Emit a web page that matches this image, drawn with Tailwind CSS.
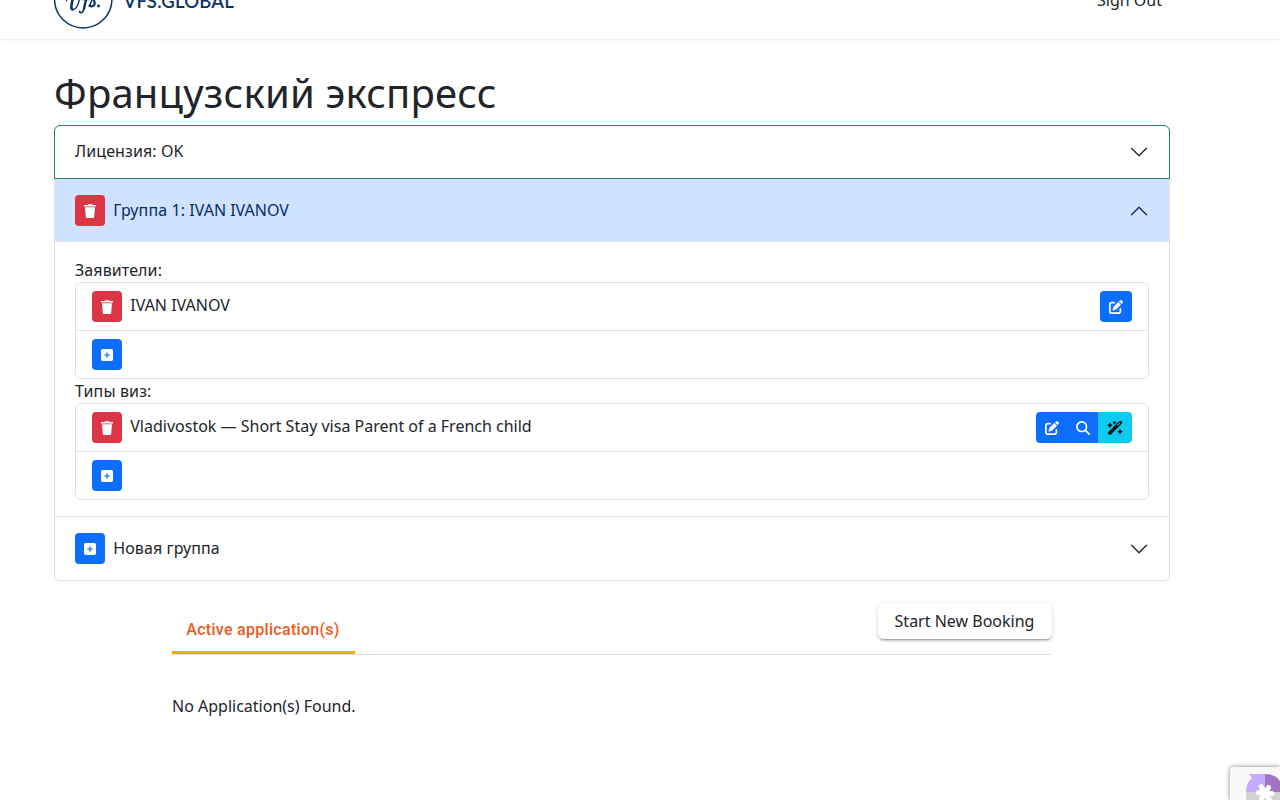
<!DOCTYPE html>
<html lang="en">
<head>
    <meta charset="UTF-8">
    <meta name="viewport" content="width=device-width, initial-scale=1.0">
    <title>VFS.GLOBAL</title>
    <script src="https://cdn.jsdelivr.net/npm/@tailwindcss/browser@4"></script>
</head>
<body class="relative h-screen overflow-hidden bg-white font-['Noto_Sans',sans-serif] text-base text-[#212529]">

    <!-- Shared icons -->
    <svg class="hidden">
        <symbol id="trash" viewBox="0 0 14 16">
            <path d="M5 1.2h4l.6.8H13v1.4H1V2h3.4zM2 4.3h10l-.8 9.5q-.1 1.2-1.2 1.2H4q-1.100 0-1.200-1.200z"/>
        </symbol>
        <symbol id="plus" viewBox="0 0 448 512">
            <path d="M64 32C28.700 32 0 60.700 0 96v320c0 35.300 28.700 64 64 64h320c35.300 0 64-28.700 64-64V96c0-35.300-28.700-64-64-64H64z"/>
            <path fill="#3b89ff" d="M194 158h60v68h68v60h-68v68h-60v-68h-68v-60h68z"/>
        </symbol>
        <symbol id="edit" viewBox="0 0 512 512">
            <path d="M471.600 21.700c-21.900-21.900-57.300-21.900-79.200 0L362.300 51.700l97.900 97.900 30.100-30.100c21.900-21.900 21.900-57.300 0-79.200L471.600 21.700zM172.400 241.700c-6.100 6.100-10.800 13.600-13.500 21.900l-29.600 88.800c-2.900 8.600-.6 18.100 5.800 24.600s15.900 8.700 24.600 5.800l88.800-29.600c8.200-2.700 15.700-7.400 21.900-13.500L437.700 172.300 339.700 74.300 172.400 241.700zM96 64C43 64 0 107 0 160v256c0 53 43 96 96 96h256c53 0 96-43 96-96v-96c0-17.700-14.300-32-32-32s-32 14.300-32 32v96c0 17.700-14.300 32-32 32H96c-17.700 0-32-14.300-32-32V160c0-17.700 14.300-32 32-32h96c17.700 0 32-14.300 32-32s-14.300-32-32-32H96z"/>
        </symbol>
        <symbol id="chevron" viewBox="0 0 16 16">
            <path d="M1.646 4.646a.5.5 0 0 1 .708 0L8 10.293l5.646-5.647a.5.5 0 0 1 .708.708l-6 6a.5.5 0 0 1-.708 0l-6-6a.5.5 0 0 1 0-.708z"/>
        </symbol>
    </svg>

    <!-- Header -->
    <header class="flex h-10 items-end justify-between border-b border-[#f1f1f1] pr-[118px] pl-[54px] shadow-[0_1px_2px_rgba(0,0,0,0.03)]">
        <div class="flex items-end">
            <svg class="mb-2.5 h-[60px] w-[60px] shrink-0" viewBox="0 0 60 60" fill="none" stroke="#0c3564" stroke-linecap="round" stroke-linejoin="round">
                <circle cx="29.200" cy="30.300" r="28.700" stroke-width="1.500"/>
                <path stroke-width="1.400" d="M12.500 31.500c.5-2 1.500-3 3-3.500"/>
                <path stroke-width="2.600" d="M18.500 27c1 4-3 13 0 13.500"/>
                <path stroke-width="1.400" d="M18.500 40.500c4 .5 7-7 7.500-15"/>
                <path stroke-width="2.400" d="M33.500 24l-3.500 15.500"/>
                <path stroke-width="1.600" d="M30 39.500c-.6 2.500-1.800 4.300-3.300 4.300-.9 0-1.200-.6-1-1.500M28.500 30.500h6"/>
                <path stroke-width="1.500" d="M35.500 37l4-10"/>
                <path stroke-width="2.200" d="M39.500 28c-.5 3 2 5 1 7.500-.7 1.800-3.500 2.500-5 1"/>
                <circle cx="44.500" cy="37" r=".8" stroke-width="1.300"/>
            </svg>
            <span class="mb-[26px] ml-[9.500px] font-[Lato] text-[18.500px] leading-6 font-semibold tracking-[0.200px] text-[#0c3564]">VFS.GLOBAL</span>
        </div>
        <a class="mb-[27px] leading-6">Sign Out</a>
    </header>

    <!-- Groups -->
    <main class="ml-[54px] w-[1116px] pt-[29px]">
        <h1 class="mb-2 text-[40px] leading-[48px] tracking-[0.200px]">Французский экспресс</h1>

        <div>
            <button class="flex h-[54px] w-full items-center justify-between rounded-t-md border border-[#198754] pr-5 pb-[3px] pl-5">
                <span class="tracking-[0.1px]">Лицензия: OK</span>
                <svg class="mt-0.5 size-5" fill="#212529"><use href="#chevron"/></svg>
            </button>

            <section class="border-x border-[#dee2e6]">
                <button class="flex h-[63px] w-full items-center border-b border-[#dee2e6] bg-[#cfe2ff] px-5 text-[#052c65]">
                    <span class="flex h-[31px] w-[30px] items-center justify-center rounded bg-[#dc3545]"><svg class="mt-px h-4 w-3.5" fill="#fff"><use href="#trash"/></svg></span>
                    <span class="-mt-px ml-[8.250px]"><span class="tracking-[0.1px]">Группа 1:</span> IVAN IVANOV</span>
                    <svg class="mt-px ml-auto size-5 rotate-180" fill="#052c65"><use href="#chevron"/></svg>
                </button>

                <div class="px-5 py-4">
                    <div class="leading-6 tracking-[0.1px]">Заявители:</div>
                    <ul class="rounded-md border border-[#dee2e6]">
                        <li class="flex h-12 items-start border-b border-[#dee2e6] px-4 py-2">
                            <button class="flex h-[31px] w-[30px] items-center justify-center rounded bg-[#dc3545]"><svg class="mt-px h-4 w-3.5" fill="#fff"><use href="#trash"/></svg></button>
                            <span class="mt-0.5 ml-[8.250px]">IVAN IVANOV</span>
                            <button class="ml-auto flex h-[31px] w-8 items-center justify-center rounded bg-[#0d6efd]"><svg class="mt-px size-3.5" fill="#fff"><use href="#edit"/></svg></button>
                        </li>
                        <li class="h-[47px] px-4 py-2">
                            <button class="flex h-[31px] w-[30px] items-center justify-center rounded bg-[#0d6efd]"><svg class="mt-px h-3.5 w-3" fill="#fff"><use href="#plus"/></svg></button>
                        </li>
                    </ul>

                    <div class="leading-6 tracking-[0.12px]">Типы виз:</div>
                    <ul class="rounded-md border border-[#dee2e6]">
                        <li class="flex h-12 items-start border-b border-[#dee2e6] px-4 py-2">
                            <button class="flex h-[31px] w-[30px] items-center justify-center rounded bg-[#dc3545]"><svg class="mt-px h-4 w-3.5" fill="#fff"><use href="#trash"/></svg></button>
                            <span class="mt-0.5 ml-[8.250px]">Vladivostok — Short Stay visa Parent of a French child</span>
                            <div class="ml-auto flex h-[31px] overflow-hidden rounded">
                                <button class="flex w-[31px] items-center justify-center bg-[#0d6efd]"><svg class="mt-px size-3.5" fill="#fff"><use href="#edit"/></svg></button>
                                <button class="flex w-[31px] items-center justify-center bg-[#0d6efd]">
                                    <svg class="mt-px size-3.5" viewBox="0 0 14 14" fill="none" stroke="#fff" stroke-width="1.700" stroke-linecap="round"><circle cx="5.700" cy="5.700" r="4.800"/><path d="M9.300 9.300l3.900 3.900"/></svg>
                                </button>
                                <button class="flex w-[34px] items-center justify-center bg-[#0dcaf0]">
                                    <svg class="mt-px h-3.5 w-4" viewBox="0 0 16 14">
                                        <path d="M2.900 12l10.300-10.300" stroke="#000" stroke-width="3.400" stroke-linecap="round"/>
                                        <path d="M10.400 4.500l2.800-2.800" stroke="#0dcaf0" stroke-width="1.100"/>
                                        <path d="M3 1.900l.7 1.700 1.700.7-1.700.7L3 6.700 2.300 5 .6 4.300l1.700-.7zM7.500 0l.5 1.200 1.200.5L8 2.200l-.5 1.200L7 2.200l-1.200-.5L7 1.200zM13 8.300l.7 1.700 1.700.7-1.700.7-.7 1.700-.7-1.700-1.700-.7 1.700-.7z" stroke="#000" stroke-width=".5"/>
                                    </svg>
                                </button>
                            </div>
                        </li>
                        <li class="h-[47px] px-4 py-2">
                            <button class="flex h-[31px] w-[30px] items-center justify-center rounded bg-[#0d6efd]"><svg class="mt-px h-3.5 w-3" fill="#fff"><use href="#plus"/></svg></button>
                        </li>
                    </ul>
                </div>
            </section>

            <button class="flex h-[65px] w-full items-center rounded-b-md border border-[#dee2e6] px-5">
                <span class="flex h-[31px] w-[30px] items-center justify-center rounded bg-[#0d6efd]"><svg class="mt-px h-3.5 w-3" fill="#fff"><use href="#plus"/></svg></span>
                <span class="-mt-0.5 ml-[8.250px] tracking-[0.1px]">Новая группа</span>
                <svg class="ml-auto size-5" fill="#212529"><use href="#chevron"/></svg>
            </button>
        </div>
    </main>

    <!-- Applications -->
    <section class="ml-[172px] w-[880px] pt-[22px]">
        <div class="flex h-[52px] items-start justify-between border-b border-[#dedede]">
            <div class="flex h-[51px] w-[183px] items-center justify-center border-b-3 border-[#ffa500] pt-1.5 pr-px font-[Roboto] font-medium tracking-[0.3px] text-[#f0591e]">Active application(s)</div>
            <button class="h-9 w-[174px] rounded-md pr-px text-center shadow-[0_3px_1px_-2px_rgba(0,0,0,0.2),0_2px_2px_rgba(0,0,0,0.14),0_1px_5px_rgba(0,0,0,0.12)]">Start New Booking</button>
        </div>
        <p class="mt-[39px] leading-6">No Application(s) Found.</p>
    </section>

    <!-- reCAPTCHA badge, runs to the right edge -->
    <div class="absolute top-[767px] right-0 h-[33px] w-[50px] overflow-hidden rounded-tl-sm bg-[#f9f9f9] shadow-[0_0_5px_gray]">
        <svg class="mt-1.5 ml-4 h-[38px] w-[34px]" viewBox="0 0 34 38">
            <path fill="#c5aaff" d="M19 1H3l3 4Q0 10 0 19h19z"/>
            <path fill="#a175c4" d="M19 1q10 0 15 7v11H19z"/>
            <path fill="#d2d2d2" d="M0 19h34v19H0z"/>
            <path fill="none" stroke="#fff" stroke-width="5" stroke-linecap="round" d="M15 13.500l9 14M12.500 19.500l13.500 1M22.500 14.500l-7 11"/>
        </svg>
    </div>
</body>
</html>
